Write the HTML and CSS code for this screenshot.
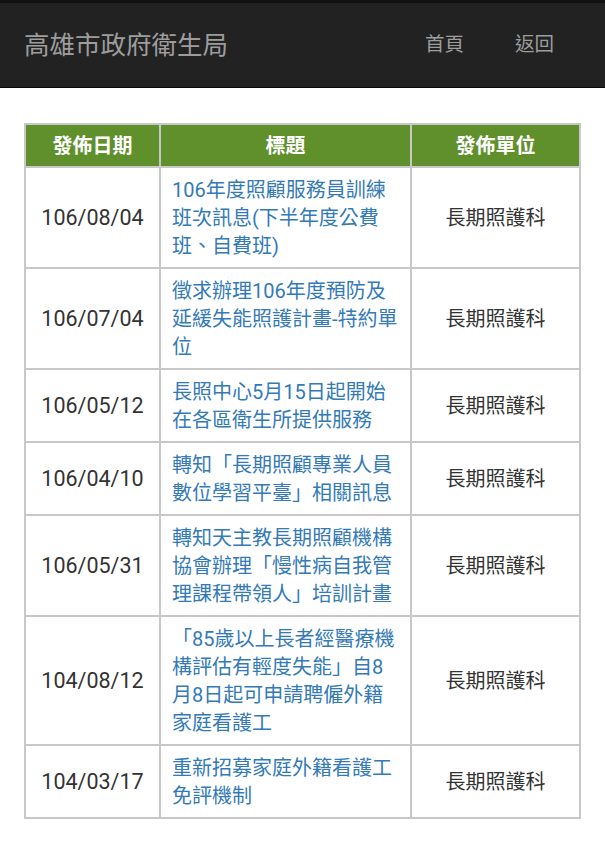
FILE: index.html
```html
<!DOCTYPE html>
<html lang="zh-Hant">
<head>
    <meta charset="UTF-8">
    <meta name="viewport" content="width=device-width, initial-scale=1.0">
    <title>高雄市政府衛生局</title>
    <link rel="stylesheet" href="styles.css">
</head>
<body>
    <nav class="navbar">
        <div class="brand">高雄市政府衛生局</div>
        <div class="nav-links">
            <a href="#">首頁</a>
            <a href="#">返回</a>
        </div>
    </nav>

    <div class="container">
        <table class="news">
            <colgroup>
                <col class="col-date">
                <col class="col-title">
                <col class="col-unit">
            </colgroup>
            <thead>
                <tr>
                    <th>發佈日期</th>
                    <th>標題</th>
                    <th>發佈單位</th>
                </tr>
            </thead>
            <tbody>
                <tr>
                    <td class="date">106/08/04</td>
                    <td><a href="#">106年度照顧服務員訓練班次訊息(下半年度公費班、自費班)</a></td>
                    <td class="unit">長期照護科</td>
                </tr>
                <tr>
                    <td class="date">106/07/04</td>
                    <td><a href="#">徵求辦理106年度預防及延緩失能照護計畫-特約單位</a></td>
                    <td class="unit">長期照護科</td>
                </tr>
                <tr>
                    <td class="date">106/05/12</td>
                    <td><a href="#">長照中心5月15日起開始在各區衛生所提供服務</a></td>
                    <td class="unit">長期照護科</td>
                </tr>
                <tr>
                    <td class="date">106/04/10</td>
                    <td><a href="#">轉知「長期照顧專業人員數位學習平臺」相關訊息</a></td>
                    <td class="unit">長期照護科</td>
                </tr>
                <tr>
                    <td class="date">106/05/31</td>
                    <td><a href="#">轉知天主教長期照顧機構協會辦理「慢性病自我管理課程帶領人」培訓計畫</a></td>
                    <td class="unit">長期照護科</td>
                </tr>
                <tr>
                    <td class="date">104/08/12</td>
                    <td><a href="#">「85歲以上長者經醫療機構評估有輕度失能」自8月8日起可申請聘僱外籍家庭看護工</a></td>
                    <td class="unit">長期照護科</td>
                </tr>
                <tr>
                    <td class="date">104/03/17</td>
                    <td><a href="#">重新招募家庭外籍看護工免評機制</a></td>
                    <td class="unit">長期照護科</td>
                </tr>
            </tbody>
        </table>
    </div>
</body>
</html>
```

FILE: styles.css
```css
* {
    box-sizing: border-box;
}

body {
    font-family: Roboto, "Noto Sans CJK TC", "Noto Sans", sans-serif;
    margin: 0;
    padding: 0;
    background: #fff;
    color: #333;
}

.navbar {
    display: flex;
    align-items: center;
    justify-content: space-between;
    height: 88px;
    padding: 0 51px 6px 24px;
    background: #222;
    border-top: 3px solid #111;
    border-bottom: 1px solid #080808;
}

.brand {
    font-size: 25.5px;
    color: #9d9d9d;
}

.nav-links {
    display: flex;
    gap: 51px;
}

.nav-links a {
    font-size: 19.5px;
    color: #9d9d9d;
    text-decoration: none;
}

.container {
    padding: 35px 24px 0;
}

table.news {
    width: 100%;
    border-collapse: collapse;
    table-layout: fixed;
}

.col-date {
    width: 135px;
}

.col-unit {
    width: 169px;
}

th, td {
    border: 2px solid #c8c8c8;
    font-size: 20px;
    line-height: 28px;
}

th {
    background: #60902c;
    color: #fff;
    font-weight: bold;
    padding: 7px 8px 6px;
    text-align: center;
}

td {
    padding: 8px 11px 7px;
    vertical-align: middle;
}

td.date {
    font-size: 21.5px;
    text-align: center;
    padding-left: 6px;
    padding-right: 6px;
}

td.unit {
    text-align: center;
}

td a {
    color: #337ab7;
    text-decoration: none;
}
```
